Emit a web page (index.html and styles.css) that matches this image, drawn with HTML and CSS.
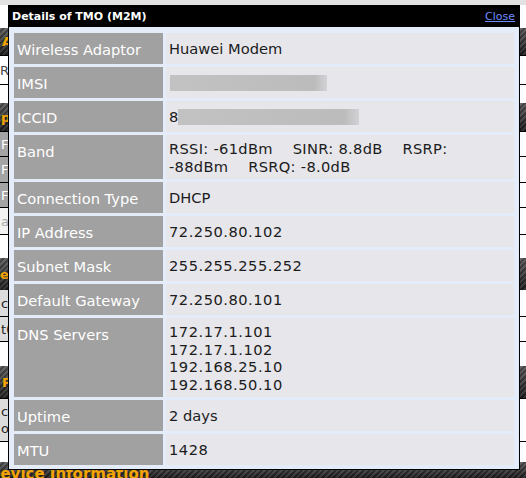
FILE: index.html
```html
<!DOCTYPE html>
<html>
<head>
<meta charset="utf-8">
<title>Details of TMO (M2M)</title>
<link rel="stylesheet" href="styles.css">
</head>
<body>
<div class="page">
  <div class="bar-top"></div>
  <div class="gap g23"></div>
  <div class="sec-head h27"><span class="t-a">A</span></div>
  <div class="bg-row r30 first"><div class="k plain">Ro</div><div class="v"></div></div>
  <div class="gap g18"></div>
  <div class="sec-head h28"><span class="t-p">p</span></div>
  <div class="bg-row r26 first"><div class="k grey">F</div><div class="v"></div></div>
  <div class="bg-row r26"><div class="k grey">F</div><div class="v"></div></div>
  <div class="bg-row r25"><div class="k grey">F</div><div class="v"></div></div>
  <div class="bg-row r27"><div class="k faint">a</div><div class="v"></div></div>
  <div class="gap g23"></div>
  <div class="sec-head h32"><span class="t-e">e</span></div>
  <div class="bg-row r27"><div class="k light">c</div><div class="v"></div></div>
  <div class="bg-row r25"><div class="k light">t(</div><div class="v"></div></div>
  <div class="gap g24"></div>
  <div class="sec-head h32"><span class="t-i">P</span></div>
  <div class="bg-row r44 first"><div class="k light two">c<br>o</div><div class="v"></div></div>
  <div class="gap g20"></div>
  <div class="sec-head h16 top"><span class="t-d">Device Information</span></div>
</div>

<div class="modal">
  <div class="modal-head">
    <span class="modal-title">Details of TMO (M2M)</span>
    <a class="close" href="#">Close</a>
  </div>
  <div class="modal-body">
    <table class="details">
      <tr><td class="label">Wireless Adaptor</td><td class="value">Huawei Modem</td></tr>
      <tr><td class="label">IMSI</td><td class="value"><span class="redact r-imsi"></span></td></tr>
      <tr><td class="label">ICCID</td><td class="value">8<span class="redact r-iccid"></span></td></tr>
      <tr class="multi"><td class="label">Band</td><td class="value band">RSSI: -61dBm&nbsp;&nbsp;&nbsp; SINR: 8.8dB&nbsp;&nbsp;&nbsp; RSRP:<br>-88dBm&nbsp;&nbsp;&nbsp; RSRQ: -8.0dB</td></tr>
      <tr><td class="label">Connection Type</td><td class="value">DHCP</td></tr>
      <tr><td class="label">IP Address</td><td class="value num">72.250.80.102</td></tr>
      <tr><td class="label">Subnet Mask</td><td class="value num">255.255.255.252</td></tr>
      <tr><td class="label">Default Gateway</td><td class="value num">72.250.80.101</td></tr>
      <tr class="multi"><td class="label">DNS Servers</td><td class="value num">172.17.1.101<br>172.17.1.102<br>192.168.25.10<br>192.168.50.10</td></tr>
      <tr><td class="label">Uptime</td><td class="value">2 days</td></tr>
      <tr><td class="label">MTU</td><td class="value num">1428</td></tr>
    </table>
  </div>
</div>
</body>
</html>
```

FILE: styles.css
```css
html, body {
  margin: 0;
  padding: 0;
}
body {
  width: 526px;
  height: 478px;
  overflow: hidden;
  position: relative;
  background: #ffffff;
  font-family: "DejaVu Sans", Verdana, sans-serif;
}

/* ---------- background page ---------- */
.page {
  width: 526px;
}
.bar-top {
  height: 5px;
  background: #e2e2e2;
}
.gap { background: #ffffff; }
.g18 { height: 18px; }
.g20 { height: 20px; }
.g23 { height: 23px; }
.g24 { height: 24px; }

.sec-head {
  display: flex;
  align-items: center;
  overflow: hidden;
  white-space: nowrap;
  color: #f4a400;
  font-weight: bold;
  font-size: 13px;
  line-height: 15px;
  background:
    linear-gradient(180deg, rgba(255,255,255,0.16), rgba(0,0,0,0.35)),
    repeating-linear-gradient(135deg, #4c4c4c 0 2px, #242424 2px 4px);
}
.sec-head.top {
  align-items: flex-start;
  padding-top: 4px;
  box-sizing: border-box;
  font-size: 15px;
  line-height: 17px;
}
.h16 { height: 16px; }
.h27 { height: 27px; }
.h28 { height: 28px; }
.h32 { height: 32px; }
.t-a { padding-left: 2px; }
.t-p { padding-left: 1px; }
.t-e { padding-left: 0; }
.t-i { padding-left: 2px; }
.t-d { text-indent: -12px; }

.bg-row {
  display: flex;
  box-sizing: border-box;
  border-bottom: 1px solid #000;
  font-size: 13px;
  white-space: nowrap;
  overflow: hidden;
}
.bg-row.first { border-top: 1px solid #000; }
.r25 { height: 25px; }
.r26 { height: 26px; }
.r27 { height: 27px; }
.r30 { height: 30px; }
.r44 { height: 44px; }
.bg-row .k {
  width: 160px;
  display: flex;
  align-items: center;
  overflow: hidden;
}
.bg-row .v {
  flex: 1;
  background: #ffffff;
}
.k.plain { background: #ffffff; color: #444444; }
.k.grey { background: #a4a4a4; color: #ffffff; padding-left: 1px; }
.k.faint { background: #f2f2f2; color: #a8a8a8; padding-left: 1px; }
.k.light { background: #dcdcdc; color: #222222; padding-left: 1px; }
.k.two { line-height: 17px; display: block; padding-top: 4px; }

/* ---------- modal overlay ---------- */
.modal {
  position: absolute;
  left: 8px;
  top: 5px;
  width: 512px;
  box-sizing: border-box;
  border: 1px solid #000000;
  background: #e3ecf8;
}
.modal-head {
  height: 21px;
  background: #000000;
  display: flex;
  align-items: center;
  justify-content: space-between;
  padding: 0 4px 0 3px;
  font-size: 11px;
}
.modal-title {
  color: #ffffff;
  font-weight: bold;
}
.close {
  color: #6f8cff;
  text-decoration: underline;
}
.modal-body {
  padding: 3px 2px 1px 2px;
}
.details {
  width: 100%;
  table-layout: fixed;
  border-collapse: separate;
  border-spacing: 3px;
  font-size: 14.67px;
  line-height: 17.5px;
}
.details tr { height: 31px; }
.details td {
  box-sizing: border-box;
}
.label {
  width: 149px;
  background: #a1a1a1;
  color: #ffffff;
  padding: 8px 3px 0 3px;
  vertical-align: top;
}
.value {
  background: #e6e6eb;
  color: #1c1c1c;
  padding: 5px 3px 4px 3px;
  vertical-align: middle;
}
.value.num { letter-spacing: 0.5px; }
.value.band { letter-spacing: 0.3px; }
.redact {
  display: inline-block;
  height: 16px;
  vertical-align: -3px;
  background: linear-gradient(90deg, #c2c2c2 0%, #bcbcbc 92%, #d2d2d6 100%);
}
.r-imsi { width: 157px; margin-left: 1px; }
.r-iccid { width: 181px; }
```
